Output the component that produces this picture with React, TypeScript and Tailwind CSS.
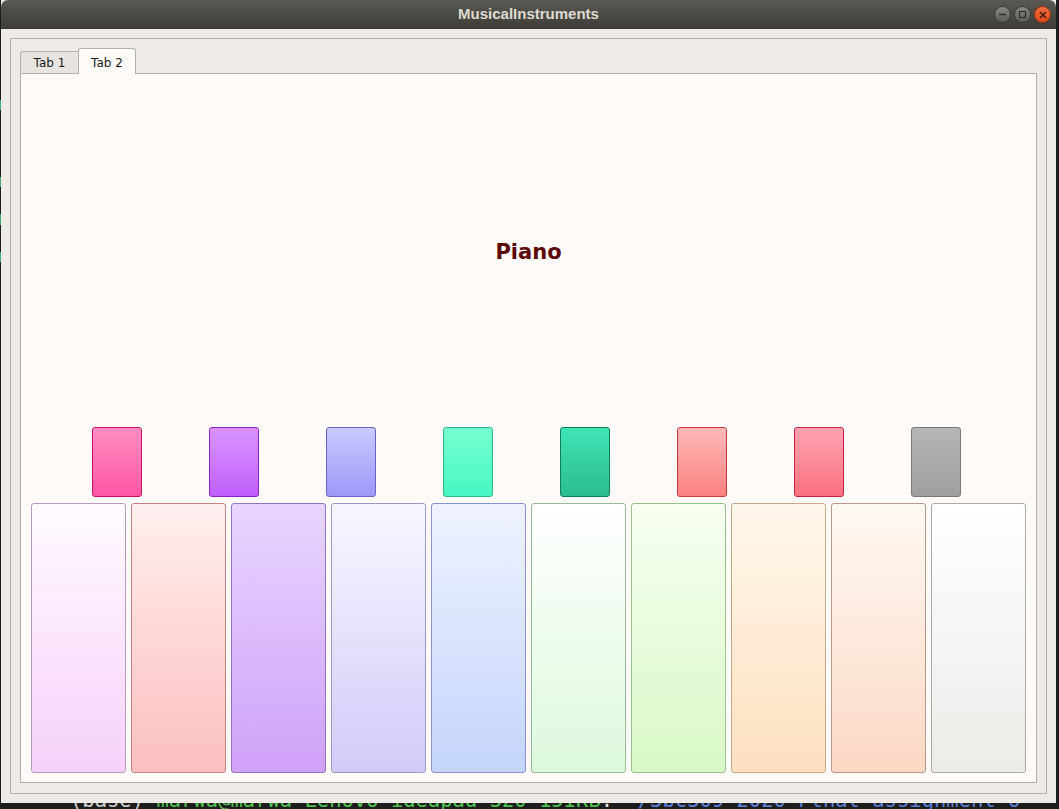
import React from "react";

// top → bottom gradients for the raised keys
const sharpKeys = [
  "from-[#ff8cc2] to-[#ff55a4] border-[#c8126a]",
  "from-[#d993ff] to-[#c05ffb] border-[#8a22c8]",
  "from-[#cacaff] to-[#9f97f8] border-[#6a62c8]",
  "from-[#74ffd2] to-[#46f6c2] border-[#2fb98a]",
  "from-[#40e4b4] to-[#2cbb90] border-[#0f7f5a]",
  "from-[#ffb8b8] to-[#f98181] border-[#c83a3a]",
  "from-[#ffa3b1] to-[#f8707f] border-[#c82242]",
  "from-[#b6b6b6] to-[#9f9f9f] border-[#777777]",
];

const naturalKeys = [
  "from-[#fffbff] to-[#f6d1fa] border-[#b99bc2]",
  "from-[#ffefee] to-[#fbbfbf] border-[#c28282]",
  "from-[#e8d5ff] to-[#cfa1f8] border-[#9272c2]",
  "from-[#f8f7ff] to-[#d2cbf8] border-[#9c99c9]",
  "from-[#eff3ff] to-[#c4d4fb] border-[#8b92c9]",
  "from-[#ffffff] to-[#dcf8dc] border-[#9aba9a]",
  "from-[#f7fff1] to-[#d8f8c6] border-[#9ac18a]",
  "from-[#fff7eb] to-[#fde0c0] border-[#c9aa8a]",
  "from-[#fff9f3] to-[#fad8c4] border-[#b99a8a]",
  "from-[#ffffff] to-[#edebe8] border-[#ababab]",
];

function TitleButton({ kind }: { kind: "min" | "max" | "close" }) {
  if (kind === "close") {
    return (
      <div className="w-[17px] h-[17px] rounded-full bg-linear-to-b from-[#f26d3d] to-[#df4a16] border border-[#9c3210] flex items-center justify-center">
        <svg width="8" height="8" viewBox="0 0 8 8">
          <path d="M1 1 L7 7 M7 1 L1 7" stroke="#3a1a0e" strokeWidth="1.4" />
        </svg>
      </div>
    );
  }
  return (
    <div className="w-[17px] h-[17px] rounded-full bg-linear-to-b from-[#8a8984] to-[#5c5b56] border border-[#3a3935] flex items-center justify-center">
      {kind === "min" ? (
        <svg width="9" height="9" viewBox="0 0 9 9">
          <path d="M1 4.5 H8" stroke="#2e2d2a" strokeWidth="1.4" />
        </svg>
      ) : (
        <svg width="9" height="9" viewBox="0 0 9 9">
          <rect x="1.5" y="1.5" width="6" height="6" fill="none" stroke="#2e2d2a" strokeWidth="1.2" />
        </svg>
      )}
    </div>
  );
}

export default function App() {
  return (
    <div className="relative w-[1059px] h-[809px] overflow-hidden bg-[#1d1d1d]">
      {/* terminal behind the window */}
      <div
        className="absolute left-[70px] top-[790px] whitespace-nowrap text-[20.5px] leading-[20px]"
        style={{ fontFamily: '"DejaVu Sans Mono", monospace' }}
      >
        <span className="text-[#cfcfcf]">(base) </span>
        <span className="text-[#4ec24e]">marwa@marwa-Lenovo-ideapad-320-15IKB</span>
        <span className="text-[#e0e0e0]">: </span>
        <span className="text-[#5b7fd6]">~/3bc309 2020 Pthat assignment o</span>
      </div>
      <div className="absolute left-0 top-[100px] w-px h-[10px] bg-[#3fae7a]" />
      <div className="absolute left-0 top-[177px] w-px h-[10px] bg-[#3fae7a]" />
      <div className="absolute left-0 top-[214px] w-px h-[11px] bg-[#3fae7a]" />
      <div className="absolute left-0 top-[252px] w-px h-[10px] bg-[#3fae7a]" />

      {/* application window */}
      <div className="absolute left-[1px] top-0 w-[1055px] h-[803px] flex flex-col bg-[#eeebe7]">
        <div className="relative h-[29px] rounded-t-[7px] bg-linear-to-b from-[#5a5852] to-[#3d3c38] flex items-center justify-center">
          <span
            className="text-[15px] font-bold text-[#dfdbd2]"
            style={{ fontFamily: '"Liberation Sans", Arial, sans-serif' }}
          >
            MusicalInstruments
          </span>
          <div className="absolute right-[5px] top-[6px] flex gap-[3px]">
            <TitleButton kind="min" />
            <TitleButton kind="max" />
            <TitleButton kind="close" />
          </div>
        </div>

        <div className="flex-1 p-[9px]">
          <div className="h-full border border-[#b3b0ab] pt-[9px] px-[9px] pb-[10px] flex flex-col">
            {/* tab bar */}
            <div
              className="flex items-end h-[25px] text-[12px] text-[#1c1c1c]"
              style={{ fontFamily: '"DejaVu Sans", sans-serif' }}
            >
              <div className="w-[58px] h-[22px] border-l border-t border-[#b3b0ab] rounded-tl-[3px] bg-[#e8e5e1] flex items-center justify-center pt-[1px]">
                Tab 1
              </div>
              <div className="relative z-10 -mb-px w-[58px] h-[26px] border-l border-t border-r border-[#b3b0ab] rounded-t-[3px] bg-[#fdfaf7] flex items-center justify-center pt-[2px]">
                Tab 2
              </div>
            </div>

            {/* tab page */}
            <div className="flex-1 border border-[#b3b0ab] bg-[#fdfaf7] flex flex-col px-[10px] pb-[9px]">
              <div className="flex-1 flex items-center justify-center pt-[4px]">
                <span
                  className="text-[21px] font-bold text-[#5c0808]"
                  style={{ fontFamily: '"DejaVu Sans", sans-serif' }}
                >
                  Piano
                </span>
              </div>

              <div className="flex gap-[67px] pl-[61px]">
                {sharpKeys.map((c, i) => (
                  <div key={i} className={`w-[50px] h-[70px] rounded-[3px] border bg-linear-to-b ${c}`} />
                ))}
              </div>

              <div className="flex gap-[5px] mt-[6px] h-[270px]">
                {naturalKeys.map((c, i) => (
                  <div key={i} className={`flex-1 rounded-[3px] border bg-linear-to-b ${c}`} />
                ))}
              </div>
            </div>
          </div>
        </div>
      </div>
    </div>
  );
}
